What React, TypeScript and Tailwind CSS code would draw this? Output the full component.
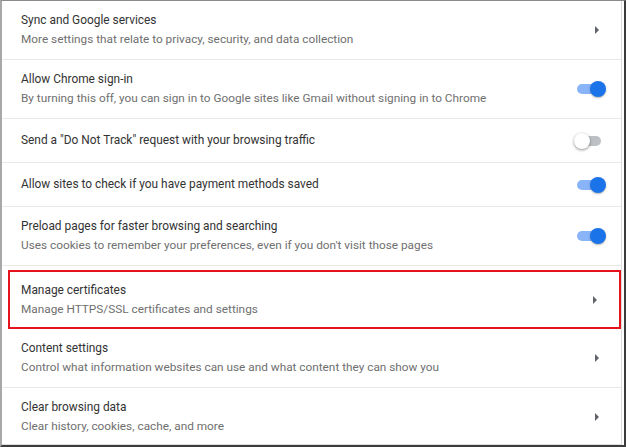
import React from "react";

type Row = {
  title: string;
  sub?: string;
  kind: "arrow" | "on" | "off";
  highlight?: boolean;
};

const ROWS: Row[] = [
  { title: "Sync and Google services", sub: "More settings that relate to privacy, security, and data collection", kind: "arrow" },
  { title: "Allow Chrome sign-in", sub: "By turning this off, you can sign in to Google sites like Gmail without signing in to Chrome", kind: "on" },
  { title: 'Send a "Do Not Track" request with your browsing traffic', kind: "off" },
  { title: "Allow sites to check if you have payment methods saved", kind: "on" },
  { title: "Preload pages for faster browsing and searching", sub: "Uses cookies to remember your preferences, even if you don't visit those pages", kind: "on" },
  { title: "Manage certificates", sub: "Manage HTTPS/SSL certificates and settings", kind: "arrow", highlight: true },
  { title: "Content settings", sub: "Control what information websites can use and what content they can show you", kind: "arrow" },
  { title: "Clear browsing data", sub: "Clear history, cookies, cache, and more", kind: "arrow" },
];

function Toggle({ on }: { on: boolean }) {
  return (
    <div className="relative w-[32px] h-[16px]">
      <div
        className={`absolute left-[3px] top-[3px] w-[24px] h-[10px] rounded-full ${
          on ? "bg-[#8ab4f8]" : "bg-[#bdc1c6]"
        }`}
      ></div>
      <div
        className={`absolute top-0 w-[16px] h-[16px] rounded-full ${
          on ? "left-[16px] bg-[#1a73e8] shadow-[0_1px_2px_rgba(0,0,0,0.3)]" : "left-0 bg-white shadow-[0_1px_3px_rgba(0,0,0,0.45)]"
        }`}
      ></div>
    </div>
  );
}

function Arrow() {
  return (
    <svg width="6" height="10" viewBox="0 0 6 10" className="text-[#5f6368]">
      <path d="M1 1 L5 5 L1 9 Z" fill="currentColor" />
    </svg>
  );
}

function RowBody({ row, height }: { row: Row; height: string }) {
  return (
    <div className={`flex items-center ${height}`}>
      <div className="flex-1 flex flex-col justify-center gap-[2px]">
        <div className="text-[11.9px] leading-[17px] text-[#333]">{row.title}</div>
        {row.sub && <div className="text-[11.8px] leading-[17px] text-[#6f6f6f]">{row.sub}</div>}
      </div>
      <div className="w-[47px] flex justify-start">
        {row.kind === "arrow" ? (
          <div className="pl-[20px]">
            <Arrow />
          </div>
        ) : (
          <Toggle on={row.kind === "on"} />
        )}
      </div>
    </div>
  );
}

function SettingRow({ row }: { row: Row }) {
  if (row.highlight) {
    // highlighted row: red frame drawn round the row
    return (
      <div className="pl-[6px] pt-[4px]">
        <div className="border-2 border-[#e5141c] pl-[11px]">
          <RowBody row={row} height="h-[55px]" />
        </div>
      </div>
    );
  }

  return (
    <div className="pl-[19px] border-b border-[#e8e8e8] last:border-b-0">
      <RowBody row={row} height={row.sub ? "h-[58px]" : "h-[43px]"} />
    </div>
  );
}

export default function App() {
  return (
    <div
      className="w-[626px] h-[447px] bg-white border-t border-t-[#8a8a8a] border-l-2 border-l-[#a8a8a8] border-r-2 border-r-[#3c3c3c] border-b-2 border-b-[#3c3c3c] overflow-hidden"
      style={{ fontFamily: "Roboto, 'Liberation Sans', sans-serif" }}
    >
      <div className="h-full border-r border-r-[#dcdcdc] border-b border-b-[#dcdcdc] mr-[2px]">
        {ROWS.map((r, i) => (
          <SettingRow key={i} row={r} />
        ))}
      </div>
    </div>
  );
}
